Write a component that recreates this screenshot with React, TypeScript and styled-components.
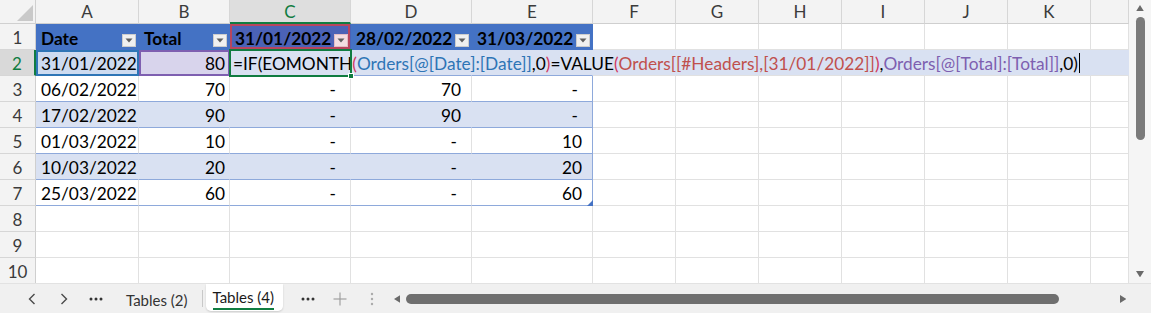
import React from 'react';
import styled, { createGlobalStyle } from 'styled-components';

const FONT = `Lato, "Liberation Sans", "Noto Sans", sans-serif`;
const FS = '17.3px';

const GlobalStyle = createGlobalStyle`
  html, body { margin: 0; padding: 0; background: #ffffff; }
  body { font-family: ${FONT}; }
  * { box-sizing: border-box; }
`;

const WIDTHS = [103, 91, 121, 121, 121, 83, 83, 83, 83, 83, 83, 38];
const COLS = ['A', 'B', 'C', 'D', 'E', 'F', 'G', 'H', 'I', 'J', 'K', 'L'];

const GRID = '#e1e1e1';
const BAND = '#d9e1f2';
const TLINE = '#8ea9db';
const GREEN = '#107c41';

const Frame = styled.div`
  width: 1151px;
  height: 313px;
  display: flex;
  flex-direction: column;
  overflow: hidden;
  background: #fff;
`;

const Main = styled.div`
  display: flex;
  height: 283px;
  flex: none;
`;

const Sheet = styled.div`
  display: grid;
  grid-template-columns: 36px ${WIDTHS.map((w) => `${w}px`).join(' ')};
  grid-template-rows: 24px repeat(10, 26px);
  width: 1129px;
  height: 283px;
  overflow: hidden;
  flex: none;
  font-family: ${FONT};
`;

const Corner = styled.div`
  background: #f3f3f3;
  border-right: 1px solid #d0d0d0;
  border-bottom: 1px solid #d0d0d0;
  display: flex;
  align-items: flex-end;
  justify-content: flex-end;
  padding: 0 2px 2px 0;
`;

const ColHead = styled.div<{ $sel?: boolean }>`
  display: flex;
  align-items: center;
  justify-content: center;
  background: ${(p) => (p.$sel ? '#dedede' : '#f3f3f3')};
  color: ${(p) => (p.$sel ? GREEN : '#3b3b3b')};
  border-right: 1px solid #d6d6d6;
  border-bottom: ${(p) => (p.$sel ? `2px solid ${GREEN}` : '1px solid #cfcfcf')};
  font-size: 17px;
  padding-top: ${(p) => (p.$sel ? '1px' : '0')};
`;

const RowHead = styled.div<{ $sel?: boolean }>`
  display: flex;
  align-items: center;
  justify-content: center;
  background: ${(p) => (p.$sel ? '#d9d9d9' : '#f3f3f3')};
  color: ${(p) => (p.$sel ? GREEN : '#3b3b3b')};
  border-right: ${(p) => (p.$sel ? `2px solid ${GREEN}` : '1px solid #cfcfcf')};
  border-bottom: 1px solid #d6d6d6;
  font-size: 17px;
  padding-top: 2px;
`;

const Cell = styled.div<{
  $bg?: string;
  $right?: boolean;
  $pr?: number;
  $rb?: string;
  $bb?: string;
  $ref?: string;
}>`
  position: relative;
  display: flex;
  align-items: flex-end;
  justify-content: ${(p) => (p.$right ? 'flex-end' : 'flex-start')};
  padding: 0 ${(p) => p.$pr ?? 4}px 1px 5px;
  background: ${(p) => p.$bg ?? '#fff'};
  border-right: 1px solid ${(p) => p.$rb ?? GRID};
  border-bottom: 1px solid ${(p) => p.$bb ?? GRID};
  outline: ${(p) => (p.$ref ? `2px solid ${p.$ref}` : 'none')};
  outline-offset: -2px;
  font-size: ${FS};
  color: #000;
  white-space: nowrap;
`;

const HeadCell = styled.div<{ $bg?: string; $ref?: string }>`
  display: flex;
  align-items: flex-end;
  justify-content: space-between;
  padding: 0 2px 0 5px;
  background: ${(p) => p.$bg ?? '#4472c4'};
  border-right: 1px solid ${(p) => p.$bg ?? '#4472c4'};
  border-bottom: 1px solid ${(p) => p.$bg ?? '#4472c4'};
  box-shadow: ${(p) => (p.$ref ? `inset 0 0 0 2px ${p.$ref}` : 'none')};
  font-size: ${FS};
  font-weight: 700;
  color: #000;
  white-space: nowrap;
`;

const FilterBtn = styled.div<{ $tint?: boolean }>`
  width: 14px;
  height: 13px;
  margin-bottom: 2px;
  flex: none;
  display: flex;
  align-items: center;
  justify-content: center;
  background: ${(p) => (p.$tint ? '#f3dde2' : '#f0f0f0')};
  border: 1px solid ${(p) => (p.$tint ? '#e2bcc4' : '#cdcdcd')};
`;

const Editor = styled.div`
  position: absolute;
  left: 0;
  top: 0;
  height: 25px;
  width: 899px;
  z-index: 2;
  background: ${BAND};
  display: flex;
  align-items: flex-end;
  padding: 0 0 1px 3px;
  font-size: ${FS};
  white-space: nowrap;
`;

const Seg = styled.span<{ $c?: string }>`
  color: ${(p) => p.$c ?? '#000'};
`;

const Caret = styled.span`
  display: inline-block;
  width: 1px;
  height: 20px;
  background: #000;
  margin-left: 1px;
  margin-bottom: 1px;
`;

const ActiveFrame = styled.div`
  position: absolute;
  left: -1px;
  top: -1px;
  width: 123px;
  height: 28px;
  border: 2px solid ${GREEN};
  z-index: 3;
  pointer-events: none;
`;

const FillHandle = styled.div`
  position: absolute;
  right: -4px;
  bottom: -4px;
  width: 6px;
  height: 6px;
  background: ${GREEN};
  border: 1px solid #fff;
`;

const ResizeMark = styled.svg`
  position: absolute;
  right: -1px;
  bottom: -1px;
`;

const VScroll = styled.div`
  width: 22px;
  height: 283px;
  flex: none;
  background: #f5f5f5;
  display: flex;
  flex-direction: column;
  align-items: center;
  padding: 5px 0 6px;
`;

const VThumb = styled.div`
  width: 9px;
  height: 123px;
  margin-top: 6px;
  border-radius: 5px;
  background: #7a7a7a;
`;

const Spacer = styled.div`
  flex: 1;
`;

const TabBar = styled.div`
  height: 30px;
  flex: none;
  display: flex;
  align-items: center;
  background: #f0f0f0;
  border-top: 1px solid #e2e2e2;
  padding-left: 16px;
  font-family: ${FONT};
`;

const IconBtn = styled.div<{ $ml?: number }>`
  width: 32px;
  height: 28px;
  flex: none;
  display: flex;
  align-items: center;
  justify-content: center;
  margin-left: ${(p) => p.$ml ?? 0}px;
`;

const Tab = styled.div<{ $active?: boolean }>`
  flex: none;
  height: ${(p) => (p.$active ? '27px' : '28px')};
  align-self: ${(p) => (p.$active ? 'flex-start' : 'center')};
  display: flex;
  align-items: center;
  padding: ${(p) => (p.$active ? '0 9px 2px 7px' : '2px 14px 0 14px')};
  font-size: 15px;
  color: ${(p) => (p.$active ? '#1a1a1a' : '#333')};
  background: ${(p) => (p.$active ? '#fff' : 'transparent')};
  border-radius: ${(p) => (p.$active ? '0 0 5px 5px' : '0')};
  box-shadow: ${(p) => (p.$active ? '0 1px 2px rgba(0,0,0,0.15)' : 'none')};
  margin-left: ${(p) => (p.$active ? '3px' : '0')};
`;

const TabLabel = styled.span<{ $active?: boolean }>`
  padding-bottom: ${(p) => (p.$active ? '2px' : '0')};
  border-bottom: ${(p) => (p.$active ? `2px solid ${GREEN}` : 'none')};
  margin-top: ${(p) => (p.$active ? '4px' : '0')};
`;

const TabSep = styled.div`
  width: 1px;
  height: 17px;
  background: #c8c8c8;
  flex: none;
`;

const HScroll = styled.div`
  width: 742px;
  flex: none;
  display: flex;
  align-items: center;
  height: 100%;
`;

const HArrow = styled.div<{ $w: number }>`
  width: ${(p) => p.$w}px;
  flex: none;
  display: flex;
  align-items: center;
  justify-content: center;
`;

const HTrack = styled.div`
  flex: 1;
  display: flex;
  align-items: center;
`;

const HThumb = styled.div`
  width: 653px;
  height: 10px;
  border-radius: 5px;
  background: #6f6f6f;
`;

const Tri = ({ dir, color = '#6a6a6a', size = 7 }: { dir: 'up' | 'down' | 'left' | 'right'; color?: string; size?: number }) => {
  const s = size;
  const pts =
    dir === 'up'
      ? `0,${s * 0.8} ${s / 2},0 ${s},${s * 0.8}`
      : dir === 'down'
      ? `0,0 ${s},0 ${s / 2},${s * 0.8}`
      : dir === 'left'
      ? `${s * 0.8},0 ${s * 0.8},${s} 0,${s / 2}`
      : `0,0 ${s * 0.8},${s / 2} 0,${s}`;
  const w = dir === 'up' || dir === 'down' ? s : s * 0.8;
  const h = dir === 'up' || dir === 'down' ? s * 0.8 : s;
  return (
    <svg width={w} height={h} viewBox={`0 0 ${w} ${h}`}>
      <polygon points={pts} fill={color} />
    </svg>
  );
};

const DropArrow = () => (
  <svg width="8" height="5" viewBox="0 0 8 5">
    <polygon points="0.5,0.5 7.5,0.5 4,4.5" fill="#5f5f5f" />
  </svg>
);

const Dots = ({ color = '#333' }: { color?: string }) => (
  <svg width="14" height="4" viewBox="0 0 14 4">
    <circle cx="2" cy="2" r="1.5" fill={color} />
    <circle cx="7" cy="2" r="1.5" fill={color} />
    <circle cx="12" cy="2" r="1.5" fill={color} />
  </svg>
);

const VDots = () => (
  <svg width="4" height="14" viewBox="0 0 4 14">
    <circle cx="2" cy="2" r="1.2" fill="#aaa" />
    <circle cx="2" cy="7" r="1.2" fill="#aaa" />
    <circle cx="2" cy="12" r="1.2" fill="#aaa" />
  </svg>
);

const Chevron = ({ left }: { left?: boolean }) => (
  <svg width="8" height="12" viewBox="0 0 8 12">
    <polyline
      points={left ? '6.5,1 1.5,6 6.5,11' : '1.5,1 6.5,6 1.5,11'}
      fill="none"
      stroke="#4a4a4a"
      strokeWidth="1.4"
    />
  </svg>
);

const Plus = () => (
  <svg width="14" height="14" viewBox="0 0 14 14">
    <line x1="7" y1="0.5" x2="7" y2="13.5" stroke="#9a9a9a" strokeWidth="1.1" />
    <line x1="0.5" y1="7" x2="13.5" y2="7" stroke="#9a9a9a" strokeWidth="1.1" />
  </svg>
);

type Row = { date: string; total: string; c: string; d: string; e: string };
const DATA: Row[] = [
  { date: '06/02/2022', total: '70', c: '-', d: '70', e: '-' },
  { date: '17/02/2022', total: '90', c: '-', d: '90', e: '-' },
  { date: '01/03/2022', total: '10', c: '-', d: '-', e: '10' },
  { date: '10/03/2022', total: '20', c: '-', d: '-', e: '20' },
  { date: '25/03/2022', total: '60', c: '-', d: '-', e: '60' },
];

const RED = '#c0504d';
const PAREN = '#d0365f';
const BLUE = '#2e75b6';
const PURPLE = '#7e5fb0';

const PlainCells = ({ from, row, bg, bb }: { from: number; row: number; bg?: string; bb?: string }) => (
  <>
    {COLS.slice(from).map((c) => (
      <Cell key={`${row}-${c}`} $bg={bg} $rb={bg ? bg : undefined} $bb={bb} />
    ))}
  </>
);

export default function App() {
  return (
    <Frame>
      <GlobalStyle />
      <Main>
        <Sheet>
          <Corner>
            <svg width="16" height="16" viewBox="0 0 16 16">
              <polygon points="16,0 16,16 0,16" fill="#c9c9c9" />
            </svg>
          </Corner>
          {COLS.map((c) => (
            <ColHead key={c} $sel={c === 'C'}>
              {c === 'L' ? '' : c}
            </ColHead>
          ))}

          <RowHead>1</RowHead>
          <HeadCell>
            <span>Date</span>
            <FilterBtn>
              <DropArrow />
            </FilterBtn>
          </HeadCell>
          <HeadCell>
            <span>Total</span>
            <FilterBtn>
              <DropArrow />
            </FilterBtn>
          </HeadCell>
          <HeadCell $bg="#4b62b6" $ref="#b8455e">
            <span>31/01/2022</span>
            <FilterBtn $tint>
              <DropArrow />
            </FilterBtn>
          </HeadCell>
          <HeadCell>
            <span>28/02/2022</span>
            <FilterBtn>
              <DropArrow />
            </FilterBtn>
          </HeadCell>
          <HeadCell>
            <span>31/03/2022</span>
            <FilterBtn>
              <DropArrow />
            </FilterBtn>
          </HeadCell>
          <PlainCells from={5} row={1} />

          <RowHead $sel>2</RowHead>
          <Cell $bg="#cddbf0" $bb={TLINE} $rb="#cddbf0" $ref={BLUE}>
            31/01/2022
          </Cell>
          <Cell $bg="#d8d4ec" $bb={TLINE} $rb="#d8d4ec" $ref={PURPLE} $right>
            80
          </Cell>
          <Cell $bg={BAND} $bb={TLINE} $rb={BAND}>
            <Editor>
              <Seg>=IF(EOMONTH</Seg>
              <Seg $c={PAREN}>(</Seg>
              <Seg $c={BLUE}>Orders[@[Date]:[Date]]</Seg>
              <Seg>,0</Seg>
              <Seg $c={PAREN}>)</Seg>
              <Seg>=VALUE</Seg>
              <Seg $c={PAREN}>(</Seg>
              <Seg $c={RED}>Orders[[#Headers],[31/01/2022]]</Seg>
              <Seg $c={PAREN}>)</Seg>
              <Seg>,</Seg>
              <Seg $c={PURPLE}>Orders[@[Total]:[Total]]</Seg>
              <Seg>,0)</Seg>
              <Caret />
            </Editor>
            <ActiveFrame>
              <FillHandle />
            </ActiveFrame>
          </Cell>
          <Cell $bg={BAND} $bb={TLINE} $rb={BAND} />
          <Cell $bg={BAND} $bb={TLINE} $rb={BAND} />
          <PlainCells from={5} row={2} bg={BAND} />

          {DATA.map((r, i) => {
            const rowNum = i + 3;
            const band = rowNum % 2 === 0;
            const bg = band ? BAND : '#fff';
            const inner = band ? BAND : GRID;
            const pad = (v: string) => (v === '-' ? 14 : 10);
            return (
              <React.Fragment key={rowNum}>
                <RowHead>{rowNum}</RowHead>
                <Cell $bg={bg} $bb={TLINE} $rb={inner}>
                  {r.date}
                </Cell>
                <Cell $bg={bg} $bb={TLINE} $rb={inner} $right>
                  {r.total}
                </Cell>
                <Cell $bg={bg} $bb={TLINE} $rb={inner} $right $pr={pad(r.c)}>
                  {r.c}
                </Cell>
                <Cell $bg={bg} $bb={TLINE} $rb={inner} $right $pr={pad(r.d)}>
                  {r.d}
                </Cell>
                <Cell $bg={bg} $bb={TLINE} $rb={TLINE} $right $pr={pad(r.e)}>
                  {r.e}
                  {rowNum === 7 && (
                    <ResizeMark width="6" height="6" viewBox="0 0 6 6">
                      <polygon points="6,0 6,6 0,6" fill="#4472c4" />
                    </ResizeMark>
                  )}
                </Cell>
                <PlainCells from={5} row={rowNum} />
              </React.Fragment>
            );
          })}

          {[8, 9, 10].map((n) => (
            <React.Fragment key={n}>
              <RowHead>{n}</RowHead>
              <PlainCells from={0} row={n} />
            </React.Fragment>
          ))}
        </Sheet>
        <VScroll>
          <Tri dir="up" color="#6a6a6a" size={8} />
          <VThumb />
          <Spacer />
          <Tri dir="down" color="#6a6a6a" size={8} />
        </VScroll>
      </Main>
      <TabBar>
        <IconBtn>
          <Chevron left />
        </IconBtn>
        <IconBtn>
          <Chevron />
        </IconBtn>
        <IconBtn>
          <Dots />
        </IconBtn>
        <Tab>Tables (2)</Tab>
        <TabSep />
        <Tab $active>
          <TabLabel $active>Tables (4)</TabLabel>
        </Tab>
        <IconBtn $ml={9}>
          <Dots />
        </IconBtn>
        <IconBtn>
          <Plus />
        </IconBtn>
        <IconBtn>
          <VDots />
        </IconBtn>
        <HScroll>
          <HArrow $w={18}>
            <Tri dir="left" color="#6a6a6a" size={8} />
          </HArrow>
          <HTrack>
            <HThumb />
          </HTrack>
          <HArrow $w={14}>
            <Tri dir="right" color="#6a6a6a" size={8} />
          </HArrow>
        </HScroll>
      </TabBar>
    </Frame>
  );
}
